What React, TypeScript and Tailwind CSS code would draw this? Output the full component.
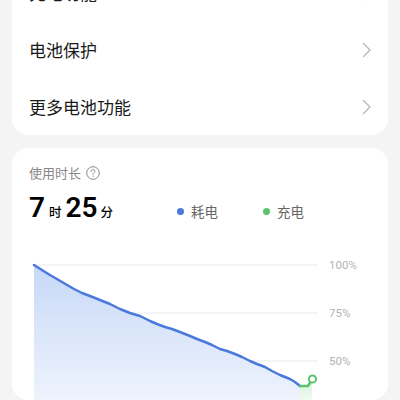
import React from "react";

const rows = ["充电功能", "电池保护", "更多电池功能"];

const usage = [
  [22, 15], [30, 20], [38, 25], [50, 32], [62, 39], [70, 43], [78, 46],
  [88, 50], [98, 54], [108, 59], [118, 63], [128, 66], [138, 71],
  [145, 74], [153, 77], [160, 79], [168, 82], [178, 86], [185, 89],
  [193, 92], [200, 95], [208, 99], [215, 101], [223, 104], [230, 107],
  [238, 111], [245, 114], [253, 117], [260, 121], [268, 125], [278, 129],
  [283, 132], [288, 136],
];

const grid = [
  { y: 15, label: "100%" },
  { y: 63, label: "75%" },
  { y: 111, label: "50%" },
];

function Chevron() {
  return (
    <svg width="10" height="16" viewBox="0 0 10 16" fill="none">
      <path d="M1.5 1.5 L8 8 L1.5 14.5" stroke="#b8b8b8" strokeWidth="1.4" strokeLinecap="round" strokeLinejoin="round" />
    </svg>
  );
}

function UsageChart() {
  const line = usage.map(([x, y], i) => `${i ? "L" : "M"}${x} ${y}`).join(" ");
  const area = `${line} L288 150 L22 150 Z`;
  return (
    <svg width="376" height="150" viewBox="0 0 376 150" className="block">
      <defs>
        <linearGradient id="blueFill" x1="0" y1="0" x2="0" y2="1">
          <stop offset="0" stopColor="#c7d9f7" />
          <stop offset="1" stopColor="#eef3fd" />
        </linearGradient>
        <linearGradient id="greenFill" x1="0" y1="0" x2="0" y2="1">
          <stop offset="0" stopColor="#d4f1d8" />
          <stop offset="1" stopColor="#f0faf1" />
        </linearGradient>
      </defs>
      {grid.map((g) => (
        <g key={g.label}>
          <line x1="22" y1={g.y} x2="306" y2={g.y} stroke="#ececec" strokeWidth="1" />
          <text x="317" y={g.y + 4} fontSize="11.5" fill="#b3b3b3" fontFamily="Roboto, sans-serif">
            {g.label}
          </text>
        </g>
      ))}
      <path d={area} fill="url(#blueFill)" />
      <path d="M288 136 L296 136 L300 129 L300 150 L288 150 Z" fill="url(#greenFill)" />
      <path d={line} fill="none" stroke="#4a78dc" strokeWidth="2.5" strokeLinejoin="round" strokeLinecap="round" />
      <path d="M288 136 L296 136 L299 131" fill="none" stroke="#5cc56a" strokeWidth="2.5" strokeLinejoin="round" strokeLinecap="round" />
      <circle cx="300.5" cy="129" r="3.6" fill="#fff" stroke="#5cc56a" strokeWidth="2" />
    </svg>
  );
}

export default function App() {
  return (
    <div
      className="h-[400px] w-[400px] overflow-hidden bg-[#f4f4f4] px-3"
      style={{ fontFamily: '"Noto Sans CJK SC", Roboto, sans-serif' }}
    >
      {/* Settings list */}
      <div className="mt-[-36px] rounded-2xl bg-white">
        {rows.map((label) => (
          <div key={label} className="flex h-[57px] items-center justify-between pl-[17px] pr-[16px]">
            <span className="text-[17px] text-[#1a1a1a]">{label}</span>
            <Chevron />
          </div>
        ))}
      </div>

      {/* Usage card */}
      <div className="mt-[13px] rounded-2xl bg-white pt-[15px]">
        <div className="flex items-center gap-[5px] pl-[17px] text-[13px] leading-5 text-[#878787]">
          <span>使用时长</span>
          <svg width="14" height="14" viewBox="0 0 14 14" fill="none">
            <circle cx="7" cy="7" r="6.3" stroke="#878787" strokeWidth="1" />
            <path d="M5.1 5.5 C5.1 4.3 5.9 3.6 7 3.6 C8.1 3.6 8.9 4.3 8.9 5.3 C8.9 6.5 7 6.6 7 8.1" stroke="#878787" strokeWidth="1" strokeLinecap="round" />
            <circle cx="7" cy="10.1" r="0.7" fill="#878787" />
          </svg>
        </div>
        <div className="mt-[7px] flex h-[36px] items-center pl-[17px]">
          <div className="flex w-[148px] items-baseline text-black">
            <span className="text-[28px] font-semibold leading-[36px]" style={{ fontFamily: "Roboto, sans-serif" }}>7</span>
            <span className="ml-[4px] mr-[4px] text-[12.5px] font-medium">时</span>
            <span className="text-[28px] font-semibold leading-[36px]" style={{ fontFamily: "Roboto, sans-serif" }}>25</span>
            <span className="ml-[3px] text-[12.5px] font-medium">分</span>
          </div>
          <div className="mt-[6px] flex items-center text-[13.5px] text-[#666]">
            <span className="h-[7px] w-[7px] rounded-full bg-[#4a78dc]" />
            <span className="ml-[7px]">耗电</span>
            <span className="ml-[45px] h-[7px] w-[7px] rounded-full bg-[#5cc56a]" />
            <span className="ml-[7px]">充电</span>
          </div>
        </div>
        <div className="mt-[24px]">
          <UsageChart />
        </div>
      </div>
    </div>
  );
}
